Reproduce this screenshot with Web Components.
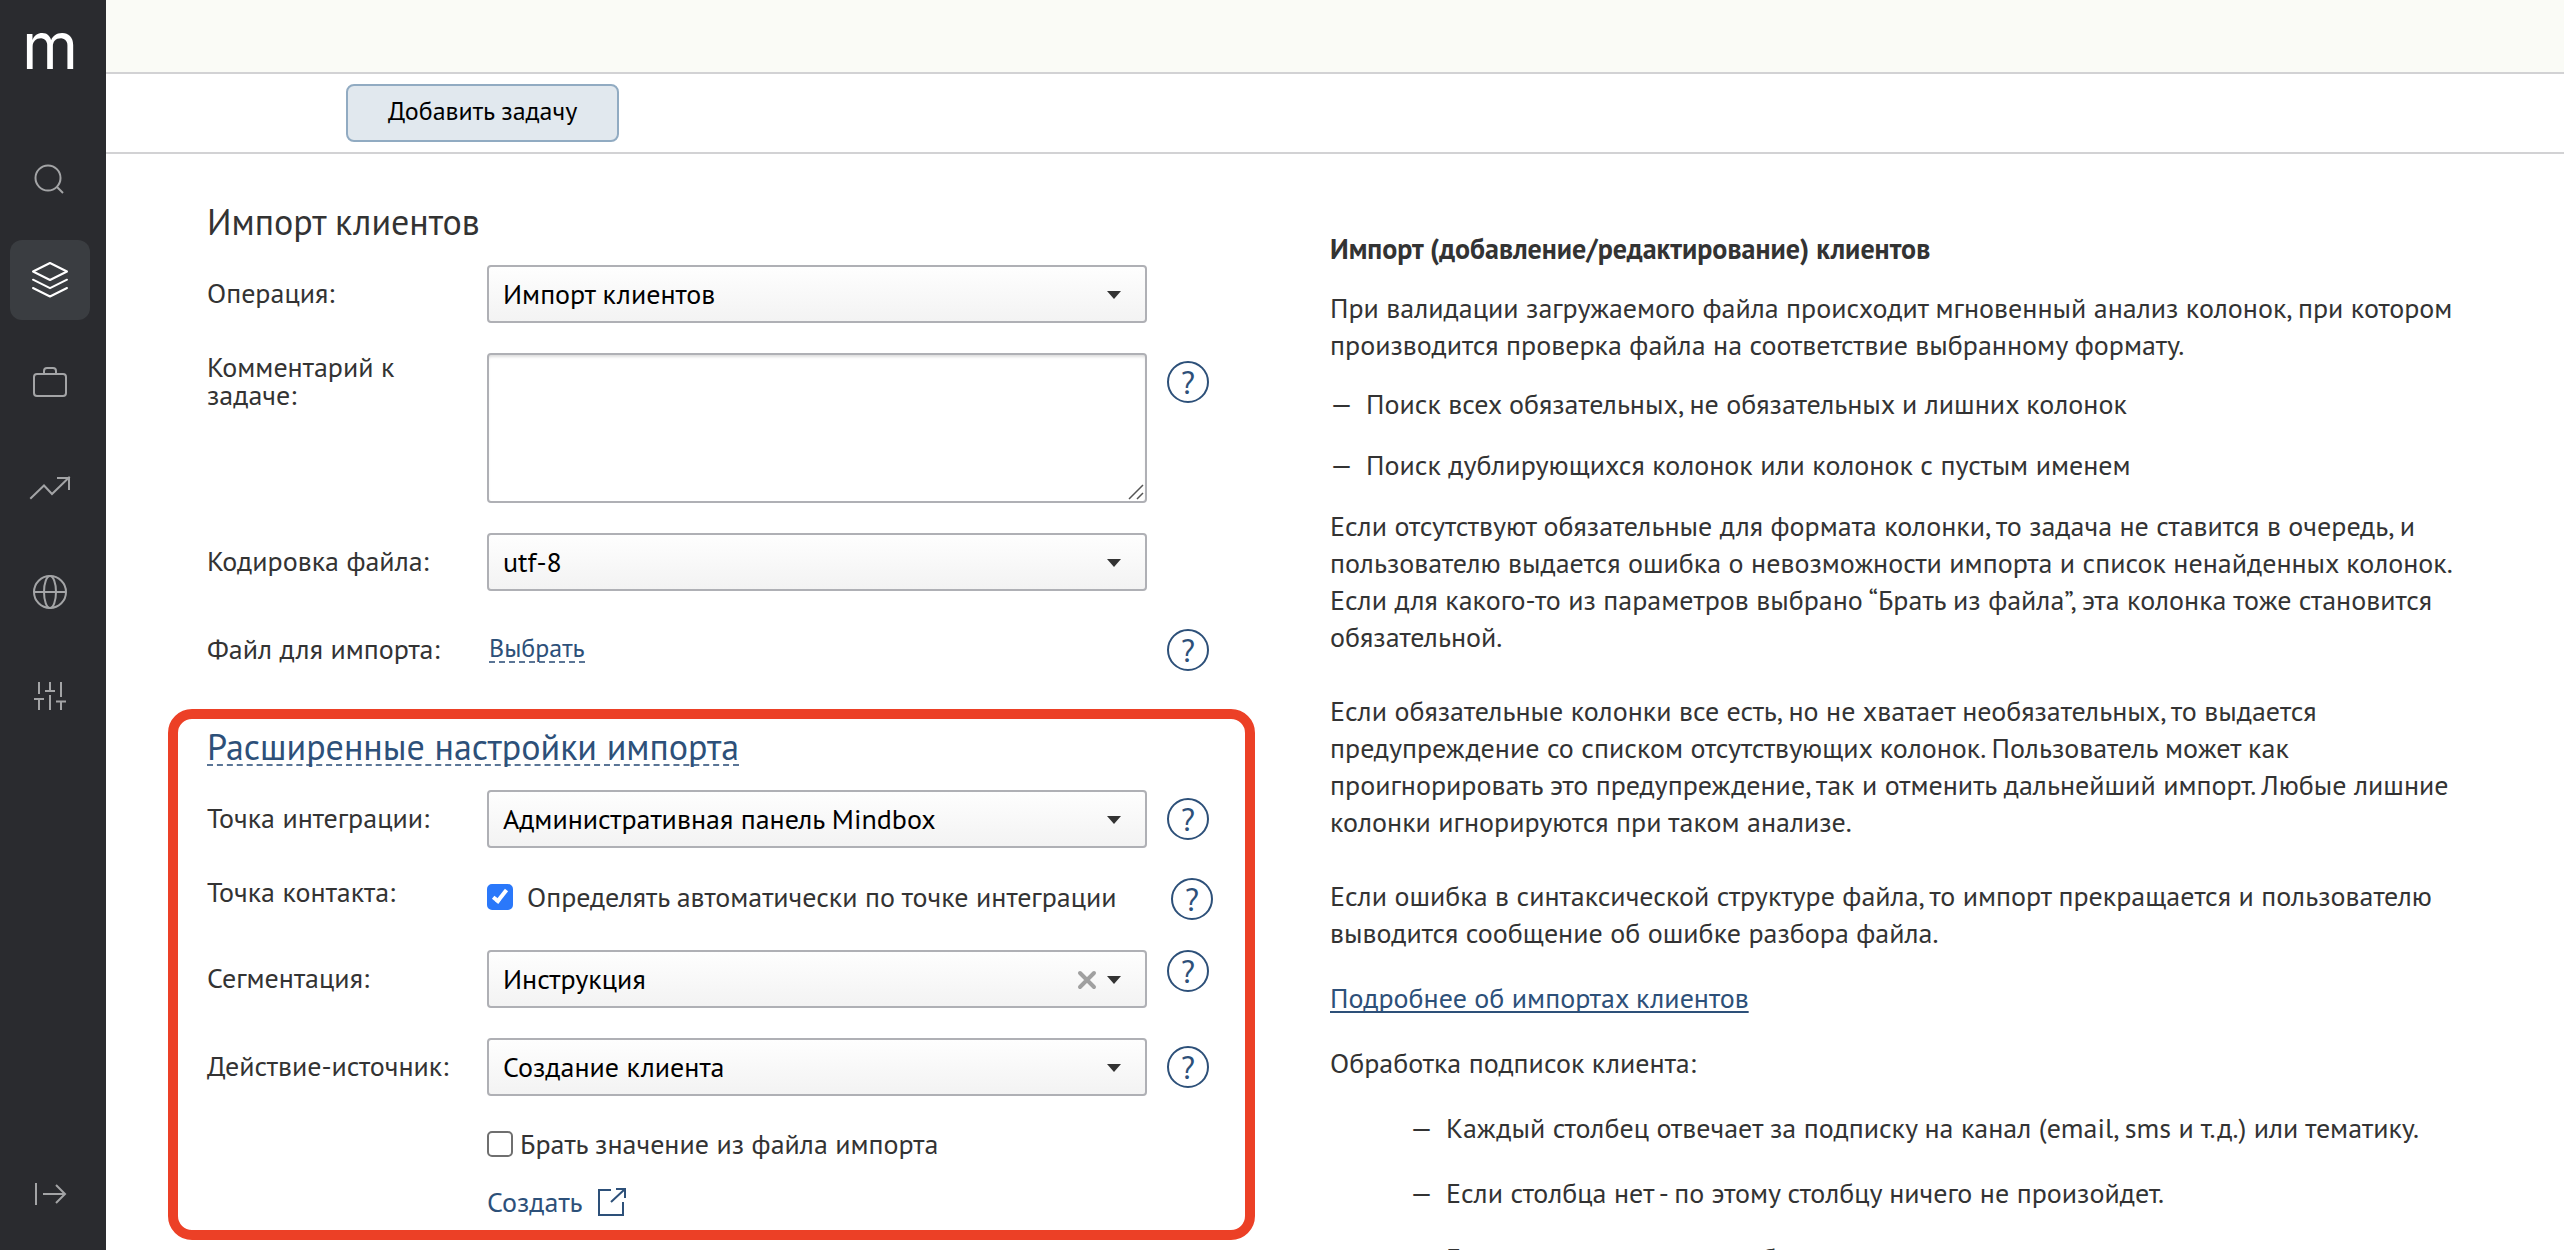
<!DOCTYPE html>
<html lang="ru">
<head>
<meta charset="utf-8">
<title>Импорт клиентов</title>
<style>
  body { margin: 0; background: #fff; color: #333; font: 28px/37px "PT Sans", "Open Sans", "Noto Sans", sans-serif; }
</style>
</head>
<body>
<import-page></import-page>

<script>
const define = (name, html, setup) => {
  const template = document.createElement('template');
  template.innerHTML = html;
  customElements.define(name, class extends HTMLElement {
    connectedCallback() {
      if (this.shadowRoot) return;
      this.attachShadow({ mode: 'open' }).append(template.content.cloneNode(true));
      if (setup) setup(this, this.shadowRoot);
    }
  });
};

/* Tick box look shared by the form's parts */
const tickBox = `
    input { appearance: none; position: relative; box-sizing: border-box; flex: none; width: 26px; height: 26px; margin: 0;
            border: 2px solid #6f6f6f; border-radius: 5px; background: #fff; }
    input:checked { border-color: #2a78fa; background: #2a78fa; }
    input:checked::before { content: ""; position: absolute; left: 7px; top: 1px; width: 6px; height: 12px;
            border: solid #fff; border-width: 0 4px 4px 0; transform: rotate(38deg); box-sizing: content-box; width: 4px; }
`;

/* Sidebar */
define('side-nav', `
  <style>
    :host { display: flex; flex-direction: column; box-sizing: border-box; width: 106px; flex: none;
            padding: 0 16px 16px 10px; background: #2a2b2f; }
    .logo { height: 136px; box-sizing: border-box; padding-top: 8px; text-align: center; color: #fff;
            font: 400 64px/76px Inter, sans-serif; text-decoration: none; }
    nav { display: flex; flex-direction: column; gap: 24px; flex: 1; }
    nav a { display: block; height: 80px; border-radius: 12px; color: #a3a4a6; }
    nav a[aria-current] { background: #3a3d41; color: #fff; }
    nav a:last-child { margin-top: auto; }
    svg { display: block; width: 80px; height: 80px; fill: none; stroke: currentColor; stroke-width: 2; }
  </style>
  <a class="logo" href="#">m</a>
  <nav>
    <a href="#" aria-label="Поиск"><svg viewBox="0 0 80 80"><circle cx="38" cy="42" r="12.5"/><path d="M47 51l6 6"/></svg></a>
    <a href="#" aria-label="Данные" aria-current="page"><svg viewBox="0 0 80 80" stroke-linecap="round" stroke-linejoin="round"><path d="M40 23L57 31.5 40 40 23 31.5zM23 39.7L40 48.2 57 39.7M23 48L40 56.5 57 48"/></svg></a>
    <a href="#" aria-label="Кампании"><svg viewBox="0 0 80 80"><rect x="24" y="30" width="32" height="22" rx="3"/><path d="M34 30v-3q0-3 3-3h6q3 0 3 3v3"/></svg></a>
    <a href="#" aria-label="Отчёты"><svg viewBox="0 0 80 80"><path d="M21 50L34 37.5 42 46 59 29.5M48 30h11v11" stroke-linecap="square"/></svg></a>
    <a href="#" aria-label="Сайт"><svg viewBox="0 0 80 80"><circle cx="40" cy="40" r="16"/><ellipse cx="40" cy="40" rx="6" ry="16"/><path d="M24 40h32"/></svg></a>
    <a href="#" aria-label="Настройки"><svg viewBox="0 0 80 80"><path d="M29 26v12M24 43h10M29 43v11M40 26v9M35 35h10M40 39v15M51 26v15M46 45.500h10M51 45.500V54"/></svg></a>
    <a href="#" aria-label="Развернуть"><svg viewBox="0 0 80 80"><path d="M26 29v22M33 40h21M46 31l9 9-9 9"/></svg></a>
  </nav>
`);

/* Strip above the form, with the page's main action */
define('task-bar', `
  <style>
    :host { display: block; flex: none; }
    .head { height: 72px; background: #fafbf6; border-bottom: 2px solid #d2d2d4; }
    .bar { padding: 10px 0 10px 240px; border-bottom: 2px solid #d2d2d4; }
    button { display: block; box-sizing: border-box; height: 58px; padding: 0 40px 6px; border: 2px solid #91abc2;
             border-radius: 8px; background: #e1e8ee; color: #000; font: inherit; font-size: 26px; }
  </style>
  <div class="head"></div>
  <div class="bar"><button type="button"><slot></slot></button></div>
`);

/* Round question mark */
define('help-tip', `
  <style>
    :host { display: block; width: 42px; height: 42px; }
    button { display: block; box-sizing: border-box; width: 42px; height: 42px; padding: 0; border: 2px solid #2d5079;
             border-radius: 50%; background: #fff; color: #2d5079; font: inherit; font-size: 32px; line-height: 36px; }
  </style>
  <button type="button">?</button>
`);

/* One labelled row; the kind attribute chooses the control */
const controls = {
  select: host => `
    <div class="box"><select id="c"><option>${host.getAttribute('value')}</option></select>
      <span class="marks">
        ${host.hasAttribute('clearable') ? `<button type="button" aria-label="Очистить"><svg width="20" height="20" viewBox="0 0 20 20"><path d="M3 3l14 14M17 3L3 17" stroke="#a0a0a0" stroke-width="4" stroke-linecap="round"/></svg></button>` : ''}
        <svg width="14" height="8" viewBox="0 0 14 8"><path d="M0 0h14L7 8z" fill="#333"/></svg>
      </span>
    </div>`,
  textarea: () => `
    <div class="box"><textarea id="c"></textarea>
      <svg class="grip" width="16" height="16" viewBox="0 0 16 16"><path d="M1 15L15 1M9 15l6-6" stroke="#555" stroke-width="1.500"/></svg>
    </div>`,
  file: host => `<a id="c" class="pick" href="#">${host.getAttribute('value')}</a>`,
  check: host => `<div class="check"><input id="c" type="checkbox" checked><label for="c">${host.getAttribute('value')}</label></div>`
};
define('form-row', `
  <style>
    :host { display: grid; grid-template-columns: 280px minmax(0, 1fr) 46px; }
    .name { padding: 14px 20px 0 0; line-height: 28px; }
    :host([kind=textarea]) .name, :host([kind=check]) .name { padding-top: 0; }
    .help { padding: 8px 0 0; }
    :host([kind=check]) .help, :host([tip=top]) .help { padding-top: 0; }
    :host([kind=check]) .help { justify-self: end; }
    .control { min-height: 42px; margin-right: 20px; }
    :host([kind=file]) .control { box-sizing: border-box; height: 58px; padding: 12px 0 0 2px; line-height: 28px; }
    .box { position: relative; }
    select, textarea { display: block; box-sizing: border-box; width: 100%; border: 2px solid #afb0b5; border-radius: 4px;
                       color: #000; font: inherit; margin: 0; }
    select { appearance: none; height: 58px; padding: 0 100px 2px 14px; background: linear-gradient(#fefefe, #f3f3f3); }
    textarea { height: 150px; resize: none; background: #fff; box-shadow: inset 0 3px 3px -1px #ddd; }
    .marks { position: absolute; right: 26px; top: 0; height: 60px; display: flex; align-items: center; gap: 10px; pointer-events: none; }
    .marks button { padding: 0; border: 0; background: none; display: flex; pointer-events: auto; }
    .grip { position: absolute; right: 3px; bottom: 3px; }
    .pick { display: inline-block; line-height: 27px; color: #2d5079; font-size: 26px; text-decoration: none; border-bottom: 2px dashed #5a7596; }
    .check { display: flex; align-items: center; gap: 14px; height: 37px; }
    ${tickBox}
  </style>
  <label class="name" for="c"></label>
  <div class="control"></div>
  <div class="help"></div>
`, (host, root) => {
  root.querySelector('.name').textContent = host.getAttribute('label');
  root.querySelector('.control').innerHTML = controls[host.getAttribute('kind')](host);
  if (host.hasAttribute('tip')) root.querySelector('.help').append(document.createElement('help-tip'));
});

/* Extra options under the last select */
define('source-extras', `
  <style>
    :host { display: flex; flex-direction: column; align-items: flex-start; gap: 27px; padding-left: 280px; }
    .check { display: flex; align-items: center; gap: 7px; height: 35px; }
    a { display: flex; align-items: center; gap: 15px; line-height: 28px; color: #2d5079; text-decoration: none; }
    svg { display: block; fill: none; stroke: currentColor; stroke-width: 2; }
    ${tickBox}
  </style>
  <div class="check"><input id="from-file" type="checkbox"><label for="from-file">Брать значение из файла импорта</label></div>
  <a href="#">Создать
    <svg width="28" height="28" viewBox="0 0 28 28"><path d="M13 2H1v25h24V14M13 14L27 1M18 1h9v9"/></svg>
  </a>
`);

/* Red frame with its own heading */
define('advanced-settings', `
  <style>
    :host { display: block; box-sizing: border-box; padding: 6px 32px 14px 29px; border: 10px solid #ec4026; border-radius: 24px; }
    h2 { height: 44px; margin: 0 0 21px; font-weight: 400; font-size: 36px; line-height: 34px; box-sizing: border-box; padding-top: 5px; }
    a { display: inline-block; color: #2d5079; text-decoration: none; border-bottom: 2px dashed #5a7596; }
    .rows { display: flex; flex-direction: column; gap: 30px; }
  </style>
  <h2><a href="#">Расширенные настройки импорта</a></h2>
  <div class="rows"><slot></slot></div>
`);

define('import-form', `
  <style>
    :host { display: block; }
    h1 { margin: 0 0 21px; padding-left: 39px; font-weight: 400; font-size: 36px; line-height: 44px; }
    form { display: flex; flex-direction: column; gap: 30px; }
    form > form-row { margin: 0 42px 0 39px; }
  </style>
  <h1>Импорт клиентов</h1>
  <form>
    <form-row kind="select" label="Операция:" value="Импорт клиентов"></form-row>
    <form-row kind="textarea" label="Комментарий к задаче:" tip></form-row>
    <form-row kind="select" label="Кодировка файла:" value="utf-8"></form-row>
    <form-row kind="file" label="Файл для импорта:" value="Выбрать" tip></form-row>
    <advanced-settings>
      <form-row kind="select" label="Точка интеграции:" value="Административная панель Mindbox" tip></form-row>
      <form-row kind="check" label="Точка контакта:" value="Определять автоматически по точке интеграции" tip></form-row>
      <form-row kind="select" label="Сегментация:" value="Инструкция" clearable tip="top"></form-row>
      <form-row kind="select" label="Действие-источник:" value="Создание клиента" tip></form-row>
      <source-extras></source-extras>
    </advanced-settings>
  </form>
`);

define('import-guide', `
  <style>
    :host { display: block; padding-top: 30px; }
    h2 { margin: 0 0 22px; font: inherit; font-weight: 700; }
    p { margin: 0 0 22px; }
    ul { display: flex; flex-direction: column; gap: 24px; margin: 0 0 24px; padding: 0; list-style: none; }
    li { display: flex; }
    li::before { content: "—"; flex: none; width: 36px; }
    .wide { margin-bottom: 28px; }
    ul.wide { gap: 28px; padding-left: 80px; }
    .block { margin-bottom: 37px; }
    a { color: #2d5079; text-decoration-thickness: 2px; text-underline-offset: 3px; text-decoration-skip-ink: none; }
  </style>
  <h2>Импорт (добавление/редактирование) клиентов</h2>
  <p>При валидации загружаемого файла происходит мгновенный анализ колонок, при котором производится проверка файла на соответствие выбранному формату.</p>
  <ul>
    <li>Поиск всех обязательных, не обязательных и лишних колонок</li>
    <li>Поиск дублирующихся колонок или колонок с пустым именем</li>
  </ul>
  <p class="block">Если отсутствуют обязательные для формата колонки, то задача не ставится в очередь, и пользователю выдается ошибка о невозможности импорта и список ненайденных колонок. Если для какого-то из параметров выбрано “Брать из файла”, эта колонка тоже становится обязательной.</p>
  <p class="block">Если обязательные колонки все есть, но не хватает необязательных, то выдается предупреждение со списком отсутствующих колонок. Пользователь может как проигнорировать это предупреждение, так и отменить дальнейший импорт. Любые лишние колонки игнорируются при таком анализе.</p>
  <p class="wide">Если ошибка в синтаксической структуре файла, то импорт прекращается и пользователю выводится сообщение об ошибке разбора файла.</p>
  <p class="wide"><a href="#">Подробнее об импортах клиентов</a></p>
  <p class="wide">Обработка подписок клиента:</p>
  <ul class="wide">
    <li>Каждый столбец отвечает за подписку на канал (email, sms и т.д.) или тематику.</li>
    <li>Если столбца нет - по этому столбцу ничего не произойдет.</li>
    <li>Если значение есть в столбце</li>
  </ul>
`);

define('import-page', `
  <style>
    :host { display: flex; height: 100vh; overflow: hidden; }
    main { flex: 1; min-width: 0; display: flex; flex-direction: column; }
    .content { flex: 1; min-height: 0; overflow: hidden; display: grid; align-items: start;
               grid-template-columns: minmax(0, 1087fr) minmax(0, 1144fr); column-gap: 75px; padding: 46px 90px 0 62px; }
  </style>
  <side-nav></side-nav>
  <main>
    <task-bar>Добавить задачу</task-bar>
    <div class="content">
      <import-form></import-form>
      <import-guide></import-guide>
    </div>
  </main>
`);
</script>
</body>
</html>
